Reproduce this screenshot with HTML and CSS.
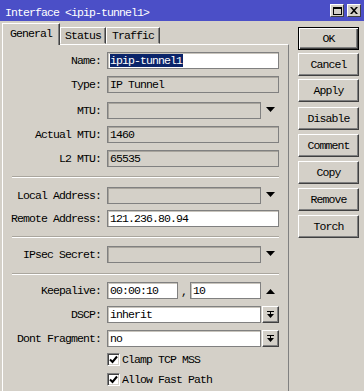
FILE: index.html
```html
<!DOCTYPE html>
<html>
<head>
<meta charset="utf-8">
<link rel="stylesheet" href="styles.css">
</head>
<body>
<div class="titlebar">
  <span class="title">Interface &lt;ipip-tunnel1&gt;</span>
  <div class="tb-btns">
    <span class="tb-btn"><svg width="9" height="8" viewBox="0 0 9 8"><rect x="0.5" y="0.5" width="8" height="7" fill="none" stroke="#000"/><rect x="0" y="0" width="9" height="2" fill="#000"/></svg></span>
    <span class="tb-btn"><svg width="8" height="7" viewBox="0 0 8 7"><path d="M0 0h2l2 2.2L6 0h2L5 3.5 8 7H6L4 4.8 2 7H0l3-3.5z" fill="#000"/></svg></span>
  </div>
</div>
<div class="main">
  <div class="left">
    <div class="tabs">
      <div class="tab active">General</div>
      <div class="tab t-status">Status</div>
      <div class="tab t-traffic">Traffic</div>
    </div>
    <div class="panel">
      <div class="row r-name"><span class="lbl">Name:</span><div class="field white wide"><span class="sel">ipip-tunnel1</span></div></div>
      <div class="row r-7"><span class="lbl">Type:</span><div class="field wide">IP Tunnel</div></div>
      <div class="row r-9"><span class="lbl">MTU:</span><div class="field narrow"></div><svg class="arr" width="9" height="5" viewBox="0 0 9 5"><polygon points="0,0 9,0 4.5,5" fill="#000"/></svg></div>
      <div class="row r-7"><span class="lbl">Actual MTU:</span><div class="field wide">1460</div></div>
      <div class="row r-7"><span class="lbl">L2 MTU:</span><div class="field wide">65535</div></div>
      <div class="sep s-9"></div>
      <div class="row r-9"><span class="lbl">Local Address:</span><div class="field narrow"></div><svg class="arr" width="9" height="5" viewBox="0 0 9 5"><polygon points="0,0 9,0 4.5,5" fill="#000"/></svg></div>
      <div class="row r-6"><span class="lbl">Remote Address:</span><div class="field white wide">121.236.80.94</div></div>
      <div class="sep s-9"></div>
      <div class="row r-8"><span class="lbl">IPsec Secret:</span><div class="field narrow"></div><svg class="arr" width="9" height="5" viewBox="0 0 9 5"><polygon points="0,0 9,0 4.5,5" fill="#000"/></svg></div>
      <div class="sep s-10"></div>
      <div class="row r-7"><span class="lbl">Keepalive:</span><div class="field white half">00:00:10</div><span class="comma">,</span><div class="field white half">10</div><svg class="arr up" width="9" height="5" viewBox="0 0 9 5"><polygon points="0,5 9,5 4.5,0" fill="#000"/></svg></div>
      <div class="row r-7"><span class="lbl">DSCP:</span><div class="field white narrow">inherit</div><span class="ddbtn"><svg width="7" height="8" viewBox="0 0 7 8"><rect x="0" y="0" width="7" height="1" fill="#000"/><polygon points="0,3 7,3 3.5,7" fill="#000"/><rect x="3" y="1" width="1" height="2" fill="#000"/></svg></span></div>
      <div class="row r-7"><span class="lbl">Dont Fragment:</span><div class="field white narrow">no</div><span class="ddbtn"><svg width="7" height="8" viewBox="0 0 7 8"><rect x="0" y="0" width="7" height="1" fill="#000"/><polygon points="0,3 7,3 3.5,7" fill="#000"/><rect x="3" y="1" width="1" height="2" fill="#000"/></svg></span></div>
      <div class="crow c-6"><span class="cb"><svg width="9" height="9" viewBox="0 0 9 9"><path d="M1 4.5 L3.5 7 L8 1.5" fill="none" stroke="#000" stroke-width="2"/></svg></span><span class="ctext">Clamp TCP MSS</span></div>
      <div class="crow c-7"><span class="cb"><svg width="9" height="9" viewBox="0 0 9 9"><path d="M1 4.5 L3.5 7 L8 1.5" fill="none" stroke="#000" stroke-width="2"/></svg></span><span class="ctext">Allow Fast Path</span></div>
    </div>
  </div>
  <div class="buttons">
    <div class="btn ok">OK</div>
    <div class="btn">Cancel</div>
    <div class="btn">Apply</div>
    <div class="btn g2">Disable</div>
    <div class="btn g">Comment</div>
    <div class="btn g">Copy</div>
    <div class="btn g">Remove</div>
    <div class="btn g">Torch</div>
  </div>
</div>
</body>
</html>
```
FILE: styles.css
```css
* { box-sizing: border-box; margin: 0; padding: 0; }
html, body { width: 364px; height: 391px; overflow: hidden; }
body {
  background: #d4d0c8;
  font-family: "Liberation Mono", "DejaVu Sans Mono", monospace;
  font-size: 11.5px;
  letter-spacing: -0.9px;
  color: #000;
}
.titlebar {
  height: 21px;
  background: #4b4fc7;
  color: #fff;
  display: flex;
  justify-content: space-between;
  align-items: flex-start;
  padding: 0 3px 0 5px;
}
.title { line-height: 13px; margin-top: 6px; white-space: pre; }
.tb-btns { display: flex; gap: 3px; margin-top: 4px; }
.tb-btn {
  width: 14px; height: 13px;
  background: #d4d0c8;
  border: 1px solid;
  border-color: #fff #404040 #404040 #fff;
  display: flex; align-items: center; justify-content: center;
}
.tb-btn svg { display: block; }

.main { display: flex; }
.left { width: 289px; padding-left: 2px; }
.tabs { display: flex; align-items: flex-end; height: 23px; }
.tab {
  height: 17px;
  line-height: 15px;
  text-align: center;
  background: #cdc9c1;
  border: 1px solid;
  border-color: #fff #404040 transparent #fff;
  box-shadow: inset -1px 0 0 #808080;
}
.tab.active {
  width: 58px;
  height: 22px;
  line-height: 19px;
  margin-bottom: -1px;
  background: #d4d0c8;
  position: relative;
  z-index: 2;
  border-bottom: 0;
}
.t-status { width: 46px; }
.t-traffic { width: 54px; }

.panel {
  width: 287px;
  height: 347px;
  border-top: 1px solid #fff;
  border-left: 1px solid #fff;
  border-right: 1px solid #808080;
  display: flex;
  flex-direction: column;
}
.row { display: flex; align-items: flex-start; height: 17px; flex: none; }
.r-name { margin-top: 7px; }
.r-6 { margin-top: 6px; }
.r-7 { margin-top: 7px; }
.r-8 { margin-top: 8px; }
.r-9 { margin-top: 9px; }
.lbl {
  width: 98px;
  margin-right: 6px;
  text-align: right;
  line-height: 17px;
  white-space: pre;
}
.field {
  height: 17px;
  border: 1px solid #808080;
  box-shadow: inset 1px 1px 0 #a8a49c;
  background: #d4d0c8;
  line-height: 15px;
  padding-left: 2px;
  white-space: pre;
  overflow: hidden;
}
.field.white { background: #fff; box-shadow: inset 1px 1px 0 #c8c4bc; }
.wide { width: 172px; }
.narrow { width: 154px; }
.half { width: 71px; }
.sel { background: #0a246a; color: #fff; display: inline-block; line-height: 13px; margin-top: 1px; padding-right: 1px; }
.arr { display: block; margin: 5px 0 0 5px; }
.arr.up { margin-top: 7px; }
.comma { width: 12px; text-align: center; line-height: 19px; }
.ddbtn {
  width: 17px; height: 17px;
  margin-left: 1px;
  background: #d4d0c8;
  border: 1px solid;
  border-color: #fff #404040 #404040 #fff;
  box-shadow: inset -1px -1px 0 #808080;
  display: flex; align-items: center; justify-content: center;
}
.ddbtn svg { display: block; }

.sep {
  width: 267px;
  margin-left: 9px;
  height: 2px;
  border-top: 1px solid #aaa69e;
  border-bottom: 1px solid #fff;
  flex: none;
}
.s-9 { margin-top: 9px; }
.s-10 { margin-top: 10px; }

.crow { display: flex; align-items: center; height: 13px; padding-left: 104px; flex: none; }
.c-6 { margin-top: 6px; }
.c-7 { margin-top: 7px; }
.cb {
  width: 13px; height: 13px;
  background: #fff;
  border: 1px solid;
  border-color: #808080 #fff #fff #808080;
  box-shadow: inset 1px 1px 0 #404040, inset -1px -1px 0 #d4d0c8;
  display: flex; align-items: center; justify-content: center;
}
.cb svg { display: block; }
.ctext { margin-left: 2px; line-height: 13px; white-space: pre; }

.buttons { width: 61px; margin-left: 9px; padding-top: 6px; display: flex; flex-direction: column; }
.btn {
  height: 23px;
  margin-top: 3px;
  line-height: 21px;
  text-align: center;
  background: #d4d0c8;
  border: 1px solid;
  border-color: #fff #404040 #404040 #fff;
  box-shadow: inset -1px -1px 0 #808080;
}
.btn.ok {
  margin-top: 0;
  border-color: #000;
  box-shadow: inset 1px 1px 0 #fff, inset -1px -1px 0 #404040, inset -2px -2px 0 #808080;
}
.btn.g2 { margin-top: 5px; }
.btn.g { margin-top: 4px; }
```
